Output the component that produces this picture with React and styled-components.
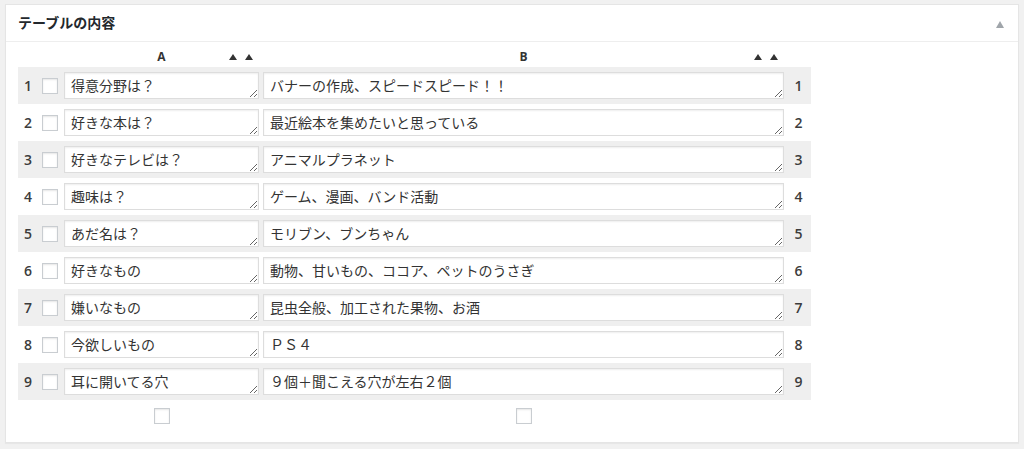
import React from 'react';
import styled, {createGlobalStyle} from 'styled-components';

const GlobalStyle = createGlobalStyle`
  body {
    margin: 0;
    background: #f1f1f1;
    font-family: "Open Sans", "Noto Sans CJK JP", sans-serif;
    color: #444;
  }
`;

const Page = styled.div`
  padding: 4px 5px;
`;

const Postbox = styled.div`
  background: #fff;
  border: 1px solid #e5e5e5;
  box-shadow: 0 1px 1px rgba(0, 0, 0, 0.04);
  height: 439px;
  box-sizing: border-box;
`;

const Header = styled.div`
  display: flex;
  align-items: center;
  justify-content: space-between;
  height: 36px;
  padding: 0 14px 0 12px;
  border-bottom: 1px solid #eee;
`;

const Title = styled.h2`
  margin: 0;
  font-family: "Noto Sans CJK JP", sans-serif;
  font-size: 14px;
  font-weight: 700;
  line-height: 1.4;
  color: #23282d;
`;

const Toggle = styled.span`
  width: 0;
  height: 0;
  margin-top: 3px;
  border-left: 4px solid transparent;
  border-right: 4px solid transparent;
  border-bottom: 7px solid #a0a5aa;
`;

const Body = styled.div`
  padding: 0 12px;
`;

const Table = styled.div`
  width: 793px;
`;

const columns = '20px 24px 199px 525px 25px';

const HeadRow = styled.div`
  display: grid;
  grid-template-columns: ${columns};
  height: 25px;
`;

const HeadCell = styled.div`
  grid-column: ${p => p.$col};
  display: grid;
  grid-template-columns: 1fr auto 1fr;
  align-items: end;
  padding: 0 8px 3px 8px;
`;

const HeadLabel = styled.span`
  grid-column: 2;
  font-size: 12px;
  font-weight: 700;
  line-height: 14px;
  color: #333;
`;

const Sorts = styled.span`
  grid-column: 3;
  justify-self: end;
  display: flex;
  gap: 8px;
  margin-bottom: 4px;
`;

const Arrow = styled.span`
  width: 0;
  height: 0;
  border-left: 4px solid transparent;
  border-right: 4px solid transparent;
  border-bottom: 6px solid #333;
`;

const Row = styled.div`
  display: grid;
  grid-template-columns: ${columns};
  align-items: center;
  height: 37px;
  background: ${p => (p.$odd ? '#efefef' : 'transparent')};
`;

const Num = styled.span`
  text-align: center;
  font-size: 14px;
  font-weight: 600;
  color: #3c3c3c;
`;

const CheckCell = styled.div`
  display: flex;
  justify-content: center;
  grid-column: ${p => p.$col || 'auto'};
`;

const Check = styled.input.attrs({type: 'checkbox'})`
  appearance: none;
  margin: 0;
  width: 16px;
  height: 16px;
  border: 1px solid #c9cdd1;
  background: #fff;
  box-shadow: inset 0 1px 2px rgba(0, 0, 0, 0.1);
  box-sizing: border-box;
`;

const Cell = styled.div`
  padding: 0 2px;
`;

const Field = styled.textarea`
  display: block;
  width: 100%;
  height: 27px;
  box-sizing: border-box;
  margin: 0;
  padding: 2px 6px;
  border: 1px solid #ddd;
  box-shadow: inset 0 1px 2px rgba(0, 0, 0, 0.07);
  background: #fff;
  color: #333;
  font-family: "Noto Sans CJK JP", sans-serif;
  font-size: 14px;
  line-height: 21px;
  overflow: hidden;
  resize: vertical;
  outline: none;
`;

const FootRow = styled.div`
  display: grid;
  grid-template-columns: ${columns};
  padding-top: 8px;
`;

const rows = [
  ['得意分野は？', 'バナーの作成、スピードスピード！！'],
  ['好きな本は？', '最近絵本を集めたいと思っている'],
  ['好きなテレビは？', 'アニマルプラネット'],
  ['趣味は？', 'ゲーム、漫画、バンド活動'],
  ['あだ名は？', 'モリブン、ブンちゃん'],
  ['好きなもの', '動物、甘いもの、ココア、ペットのうさぎ'],
  ['嫌いなもの', '昆虫全般、加工された果物、お酒'],
  ['今欲しいもの', 'ＰＳ４'],
  ['耳に開いてる穴', '９個＋聞こえる穴が左右２個'],
];

const Sort = () => (
  <Sorts>
    <Arrow />
    <Arrow />
  </Sorts>
);

export default function App() {
  return (
    <Page>
      <GlobalStyle />
      <Postbox>
        <Header>
          <Title>テーブルの内容</Title>
          <Toggle />
        </Header>
        <Body>
          <Table>
            <HeadRow>
              <HeadCell $col={3}>
                <HeadLabel>A</HeadLabel>
                <Sort />
              </HeadCell>
              <HeadCell $col={4}>
                <HeadLabel>B</HeadLabel>
                <Sort />
              </HeadCell>
            </HeadRow>
            {rows.map(([a, b], i) => (
              <Row key={i} $odd={i % 2 === 0}>
                <Num>{i + 1}</Num>
                <CheckCell>
                  <Check />
                </CheckCell>
                <Cell>
                  <Field readOnly defaultValue={a} />
                </Cell>
                <Cell>
                  <Field readOnly defaultValue={b} />
                </Cell>
                <Num>{i + 1}</Num>
              </Row>
            ))}
            <FootRow>
              <CheckCell $col={3}>
                <Check />
              </CheckCell>
              <CheckCell $col={4}>
                <Check />
              </CheckCell>
            </FootRow>
          </Table>
        </Body>
      </Postbox>
    </Page>
  );
}
